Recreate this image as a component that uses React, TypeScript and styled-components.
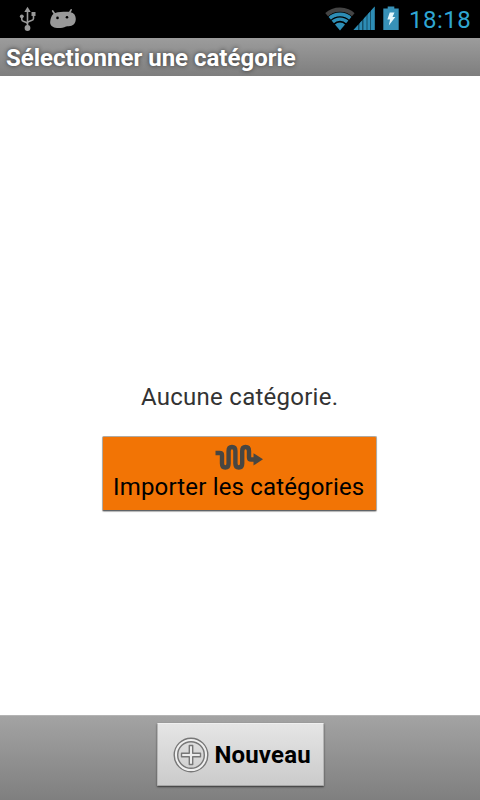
import React from "react";
import styled, { createGlobalStyle } from "styled-components";

const GlobalStyle = createGlobalStyle`
  * { box-sizing: border-box; }
  body { margin: 0; background: #fff; font-family: Roboto, "Liberation Sans", sans-serif; }
`;

const Screen = styled.div`
  width: 480px;
  height: 800px;
  display: flex;
  flex-direction: column;
  overflow: hidden;
  background: #fff;
`;

const StatusBar = styled.div`
  height: 38px;
  flex: none;
  display: flex;
  justify-content: space-between;
  background: #000;
`;

const StatusGroup = styled.div`
  display: flex;
`;

const Clock = styled.span`
  width: 71px;
  margin-left: 3px;
  font-size: 24px;
  line-height: 40px;
  font-weight: 400;
  letter-spacing: 0.5px;
  color: #2fa6d3;
  white-space: nowrap;
`;

const TitleBar = styled.header`
  height: 38px;
  flex: none;
  padding-left: 6px;
  background: linear-gradient(#9c9c9c, #7e7e7e);
`;

const Title = styled.h1`
  margin: 0;
  font-size: 24px;
  line-height: 40px;
  font-weight: 700;
  letter-spacing: 0;
  color: #fff;
  white-space: nowrap;
  text-shadow: 0 0 4px rgba(40, 40, 40, 0.9);
`;

const Content = styled.main`
  flex: 1;
  display: flex;
  flex-direction: column;
  align-items: center;
  padding: 306px 1px 0 0;
`;

const Message = styled.p`
  width: 197px;
  margin: 0 0 24px;
  font-size: 24px;
  line-height: 30px;
  letter-spacing: 0.26px;
  color: #333;
  white-space: nowrap;
`;

const ImportButton = styled.button`
  width: 275px;
  height: 75px;
  display: flex;
  flex-direction: column;
  align-items: center;
  padding: 6px 9px 0 10px;
  border: 1px solid #b0aaa2;
  border-bottom-color: #606468;
  border-radius: 2px;
  background: #f27405;
  box-shadow: 0 1px 1px rgba(0, 0, 0, 0.3);
  font-family: inherit;
  color: #000;
`;

const ImportLabel = styled.span`
  width: 254px;
  margin-top: 1px;
  font-size: 24px;
  line-height: 30px;
  letter-spacing: 0.17px;
  text-align: left;
  white-space: nowrap;
`;

const Footer = styled.footer`
  height: 85px;
  flex: none;
  display: flex;
  justify-content: center;
  align-items: flex-start;
  padding-top: 7px;
  border-top: 1px solid #b4b4b4;
  background: linear-gradient(#a3a3a3, #7f7f7f);
`;

const NewButton = styled.button`
  width: 167px;
  height: 63px;
  display: flex;
  align-items: center;
  padding: 0 0 0 15px;
  border: 1px solid;
  border-color: #efefef #b5b5b5 #a5a5a5;
  border-radius: 1px;
  background: linear-gradient(#e5e5e5, #cbcbcb);
  box-shadow: 0 1px 2px rgba(0, 0, 0, 0.6);
  font-family: inherit;
  color: #000;
`;

const NewLabel = styled.span`
  margin-left: 6px;
  font-size: 24px;
  line-height: 30px;
  font-weight: 700;
  letter-spacing: 0.15px;
  white-space: nowrap;
`;

const ImportIcon = styled.svg`
  flex: none;
  margin-right: 2px;
`;

const UsbIcon = () => (
  <svg width="50" height="38" viewBox="0 0 50 38" fill="#999" stroke="none">
    <path d="M27.5 6.8l3.2 5.2h-6.4z" />
    <path
      d="M27.5 10v17M21.8 17v2.4q0 1.6 2 2.2l2 .6q1.7.6 1.7 2M33.5 15v3.4q0 1.6-2 2.2l-2 .6q-2 .6-2 2.2"
      fill="none"
      stroke="#999"
      strokeWidth="1.6"
    />
    <circle cx="21.8" cy="16.3" r="1.9" />
    <path d="M31.5 12h4v4h-4z" />
    <circle cx="27.5" cy="28" r="2.9" />
  </svg>
);

const DroidIcon = () => (
  <svg width="30" height="38" viewBox="50 0 30 38">
    <path d="M55 14.5l-2.300-3.500M69.400 13l1.700-3.200" stroke="#999" strokeWidth="1.700" strokeLinecap="round" />
    <path
      d="M53 14.300c2.500-2.200 6.500-2.500 10.500-2.600 4-.1 8.500-.3 11 2.800 2.500 4 1.300 10-3 11.300-2 .6-3.500.2-5.500.7-2.500 1.200-5.500 1.700-9 1.500-4.500-.5-7.300-3-6.800-6.300.2-2.500 1.100-5.500 2.800-7.400z"
      fill="#999"
    />
    <circle cx="57.500" cy="17.900" r="1.300" fill="#000" />
    <circle cx="67" cy="17.200" r="1.300" fill="#000" />
  </svg>
);

const SignalIcons = () => (
  <svg width="81" height="38" viewBox="325 0 81 38">
    <defs>
      <clipPath id="wifi-cone">
        <path d="M340 30.500L324 11.500Q340 0 356 11.500z" />
      </clipPath>
      <clipPath id="signal-wedge">
        <path d="M353.500 30L374.700 6.500V30z" />
      </clipPath>
    </defs>
    <g clipPath="url(#wifi-cone)" fill="none">
      <circle cx="340" cy="30" r="20.300" stroke="#444" strokeWidth="4.200" />
      <circle cx="340" cy="30" r="15.600" stroke="#2d8db5" strokeWidth="3.600" />
      <circle cx="340" cy="30" r="10.900" stroke="#2d8db5" strokeWidth="3.400" />
      <circle cx="340" cy="30" r="7.500" fill="#2d8db5" />
    </g>
    <g clipPath="url(#signal-wedge)">
      <path d="M353 6h22v24h-22z" fill="#16526b" />
      <path d="M353 6h5v24h-5zM359.500 6h2.500v24h-2.500zM363.500 6h3v24h-3zM367.500 6h2.500v24h-2.500zM371 6h4v24h-4z" fill="#2d8db5" />
    </g>
    <path d="M383.300 8.500h4.400v-2h6.600v2h4.400V30h-15.400z" fill="#3791b7" />
    <path d="M389.700 12.500h4.800l-2 4.500h2.800l-6.500 8.500 1.300-5.900h-2.700z" fill="#e6f7fb" />
  </svg>
);

const SnakeArrowIcon = () => (
  <ImportIcon width="50" height="28" viewBox="214 443 50 28">
    <path
      d="M215.500 453h4q2.500 0 2.500 2v8.500q0 4 3.300 4t3.300-4v-12.500q0-4 3.400-4t3.400 4v12.500q0 4 3.400 4t3.400-4v-12.500q0-4 3.400-4t3.400 4v6.500q0 2 2 2h3"
      fill="none"
      stroke="#484642"
      strokeWidth="4.400"
    />
    <path d="M253.500 453.300l9.500 5.900-9.500 6.300z" fill="#484642" />
  </ImportIcon>
);

const PlusCircleIcon = () => (
  <svg width="36" height="36" viewBox="0 0 36 36" fill="none">
    <circle cx="18" cy="18" r="15" stroke="#efefef" strokeWidth="3" />
    <circle cx="18" cy="18" r="16.800" stroke="#777" strokeWidth="1.400" />
    <circle cx="18" cy="18" r="13.300" stroke="#777" strokeWidth="1.400" />
    <path d="M16.300 8.500h3.400v7.800h7.800v3.400h-7.800v7.800h-3.400v-7.800h-7.800v-3.400h7.800z" fill="#ececec" stroke="#777" strokeWidth="1.400" strokeLinejoin="round" />
  </svg>
);

export default function App() {
  return (
    <>
      <GlobalStyle />
      <Screen>
        <StatusBar>
          <StatusGroup>
            <UsbIcon />
            <DroidIcon />
          </StatusGroup>
          <StatusGroup>
            <SignalIcons />
            <Clock>18:18</Clock>
          </StatusGroup>
        </StatusBar>
        <TitleBar>
          <Title>Sélectionner une catégorie</Title>
        </TitleBar>
        <Content>
          <Message>Aucune catégorie.</Message>
          <ImportButton>
            <SnakeArrowIcon />
            <ImportLabel>Importer les catégories</ImportLabel>
          </ImportButton>
        </Content>
        <Footer>
          <NewButton>
            <PlusCircleIcon />
            <NewLabel>Nouveau</NewLabel>
          </NewButton>
        </Footer>
      </Screen>
    </>
  );
}
